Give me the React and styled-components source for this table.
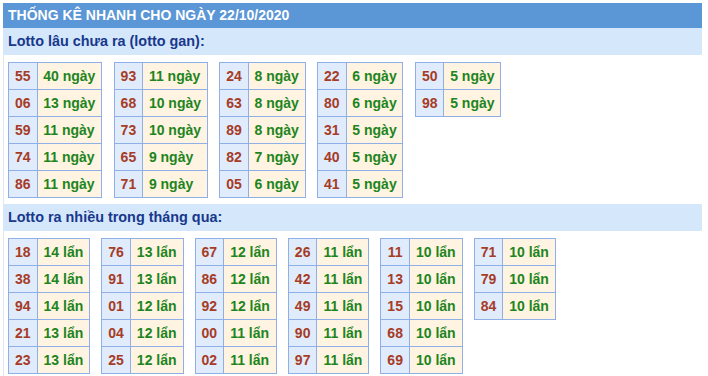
import React from "react";
import styled, { createGlobalStyle } from "styled-components";

const Global = createGlobalStyle`
  html, body { margin: 0; padding: 0; background: #ffffff; }
  body { font-family: "Liberation Sans", Arial, sans-serif; }
`;

const Wrap = styled.div`
  margin: 3px 6px 0 3px;
  width: 699px;
`;

const Title = styled.div`
  height: 25px;
  background: #5b96d6;
  color: #ffffff;
  font-weight: bold;
  font-size: 14px;
  line-height: 25px;
  padding-left: 5px;
  text-transform: uppercase;
`;

const SubTitle = styled.div`
  height: 27px;
  background: #d5e7fa;
  color: #17388c;
  font-weight: bold;
  font-size: 14.4px;
  line-height: 27px;
  padding-left: 5px;
`;

const Body = styled.div`
  display: flex;
  align-items: flex-start;
  gap: ${(p) => p.$gap}px;
  padding: 7px 0 6px 4px;
  border-left: 1px solid #dfe8f2;
`;

const Table = styled.table`
  border-collapse: collapse;
  font-size: 14px;
  font-weight: bold;
  line-height: 16px;
`;

const Num = styled.td`
  border: 1px solid #8fb0e6;
  background: #e0ebfc;
  color: #a63c26;
  padding: 5px 6px;
  text-align: center;
  white-space: nowrap;
`;

const Val = styled.td`
  border: 1px solid #8fb0e6;
  background: #fff3e1;
  color: #1d851d;
  padding: 5px ${(p) => p.$pad}px;
  white-space: nowrap;
`;

const gan = [
  [["55", 40], ["06", 13], ["59", 11], ["74", 11], ["86", 11]],
  [["93", 11], ["68", 10], ["73", 10], ["65", 9], ["71", 9]],
  [["24", 8], ["63", 8], ["89", 8], ["82", 7], ["05", 6]],
  [["22", 6], ["80", 6], ["31", 5], ["40", 5], ["41", 5]],
  [["50", 5], ["98", 5]],
];

const nhieu = [
  [["18", 14], ["38", 14], ["94", 14], ["21", 13], ["23", 13]],
  [["76", 13], ["91", 13], ["01", 12], ["04", 12], ["25", 12]],
  [["67", 12], ["86", 12], ["92", 12], ["00", 11], ["02", 11]],
  [["26", 11], ["42", 11], ["49", 11], ["90", 11], ["97", 11]],
  [["11", 10], ["13", 10], ["15", 10], ["68", 10], ["69", 10]],
  [["71", 10], ["79", 10], ["84", 10]],
];

function Group({ rows, unit, pad }) {
  return (
    <Table>
      <tbody>
        {rows.map(([n, v]) => (
          <tr key={n}>
            <Num>{n}</Num>
            <Val $pad={pad}>
              {v} {unit}
            </Val>
          </tr>
        ))}
      </tbody>
    </Table>
  );
}

export default function App() {
  return (
    <>
      <Global />
      <Wrap>
        <Title>Thống kê nhanh cho ngày 22/10/2020</Title>
        <SubTitle>Lotto lâu chưa ra (lotto gan):</SubTitle>
        <Body $gap={11.5}>
          {gan.map((g, i) => (
            <Group key={i} rows={g} unit="ngày" pad={5.7} />
          ))}
        </Body>
        <SubTitle>Lotto ra nhiều trong tháng qua:</SubTitle>
        <Body $gap={11}>
          {nhieu.map((g, i) => (
            <Group key={i} rows={g} unit="lẩn" pad={6} />
          ))}
        </Body>
      </Wrap>
    </>
  );
}
